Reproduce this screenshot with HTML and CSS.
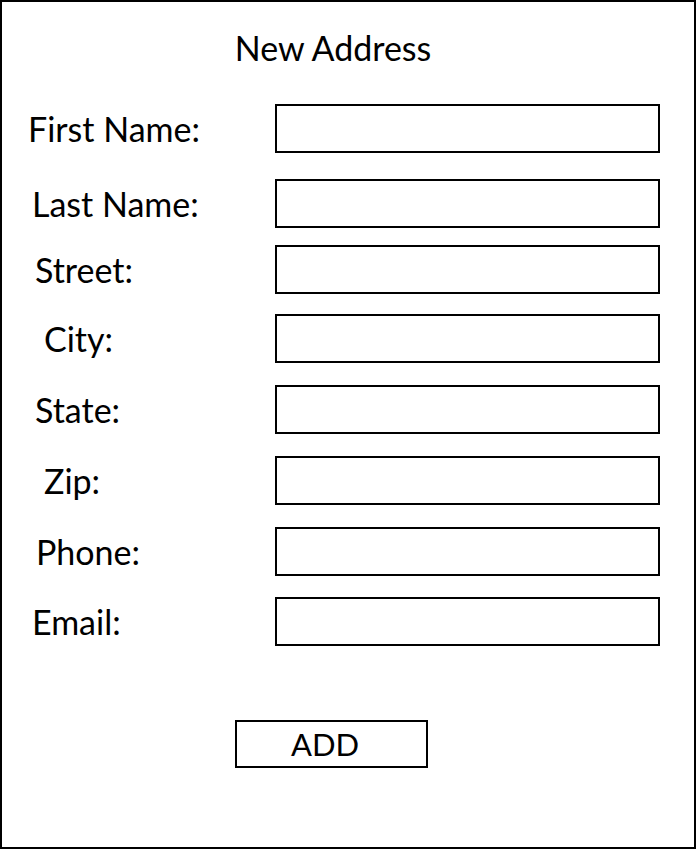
FILE: index.html
```html
<!DOCTYPE html>
<html>
<head>
<meta charset="utf-8">
<title>New Address</title>
<link rel="stylesheet" href="styles.css">
</head>
<body>
<div class="frame">
  <h1 class="title">New Address</h1>
  <form class="form">
    <div class="row r-first"><label class="lbl i-28">First Name:</label><input class="field" type="text"></div>
    <div class="row r-last"><label class="lbl i-32">Last Name:</label><input class="field" type="text"></div>
    <div class="row r-street"><label class="lbl i-35">Street:</label><input class="field" type="text"></div>
    <div class="row r-city"><label class="lbl i-44">City:</label><input class="field" type="text"></div>
    <div class="row r-state"><label class="lbl i-35">State:</label><input class="field" type="text"></div>
    <div class="row r-zip"><label class="lbl i-44">Zip:</label><input class="field" type="text"></div>
    <div class="row r-phone"><label class="lbl i-36">Phone:</label><input class="field" type="text"></div>
    <div class="row r-email"><label class="lbl i-32">Email:</label><input class="field" type="text"></div>
    <div class="actions"><button class="btn" type="button">ADD</button></div>
  </form>
</div>
</body>
</html>
```

FILE: styles.css
```css
html, body {
  margin: 0;
  padding: 0;
  background: #fff;
}
.frame {
  box-sizing: border-box;
  width: 696px;
  height: 849px;
  border: 2px solid #000;
  font-family: Lato, "Open Sans", sans-serif;
  color: #000;
}
.title {
  margin: 0;
  padding-top: 24px;
  height: 44px;
  font-size: 34px;
  font-weight: 400;
  line-height: 44px;
  width: 662px;
  text-align: center;
}
.form {
  display: flex;
  flex-direction: column;
  margin: 0;
}
.row {
  display: flex;
  align-items: center;
  height: 49px;
}
.r-first { margin-top: 34px; }
.r-last { margin-top: 26px; }
.r-street { margin-top: 17px; }
.r-city { margin-top: 20px; }
.r-state { margin-top: 22px; }
.r-zip { margin-top: 22px; }
.r-phone { margin-top: 22px; }
.r-email { margin-top: 21px; }
.lbl {
  box-sizing: border-box;
  width: 273px;
  font-size: 34px;
  line-height: 40px;
}
.i-28 { padding-left: 26px; }
.i-32 { padding-left: 30px; }
.i-35 { padding-left: 33px; }
.i-36 { padding-left: 34px; }
.i-44 { padding-left: 42px; }
.field {
  box-sizing: border-box;
  width: 385px;
  height: 49px;
  margin: 0;
  padding: 0;
  border: 2px solid #000;
  border-radius: 0;
  background: #fff;
  outline: none;
}
.actions {
  margin-top: 74px;
  padding-left: 233px;
}
.btn {
  box-sizing: border-box;
  width: 193px;
  height: 48px;
  margin: 0;
  padding: 0 13px 0 0;
  border: 2px solid #000;
  border-radius: 0;
  background: #fff;
  font-family: Lato, "Open Sans", sans-serif;
  font-size: 31px;
  color: #000;
  line-height: 44px;
}
```
